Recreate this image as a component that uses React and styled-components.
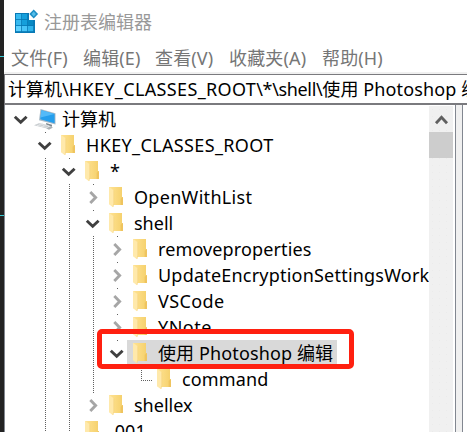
import React from "react";
import styled, { createGlobalStyle, css } from "styled-components";

const GlobalStyle = createGlobalStyle`
  * { box-sizing: border-box; }
  body {
    margin: 0;
    overflow: hidden;
    background: #fff;
    font-family: "Noto Sans", "Noto Sans CJK SC", sans-serif;
    font-size: 18px;
    color: #000;
  }
`;

const Screen = styled.div`
  position: relative;
  display: flex;
  width: 467px;
  height: 432px;
  overflow: hidden;
`;

const DesktopStrip = styled.div`
  flex: 0 0 4px;
  display: flex;
  flex-direction: column;
  gap: 158px;
  padding-top: 56px;
  background: #232323;
`;

const Tick = styled.div`
  height: 1px;
  background: #35c9d2;
`;

const Window = styled.div`
  flex: 1;
  min-width: 0;
  display: flex;
  flex-direction: column;
  background: #fff;
`;

const TitleBar = styled.header`
  height: 44px;
  flex: none;
  display: flex;
  align-items: center;
  gap: 5px;
  padding: 0 0 2px 10px;
  color: #999;
`;

const MenuBar = styled.nav`
  height: 28px;
  flex: none;
  display: flex;
  align-items: center;
  padding-left: 7px;
  color: #767676;
`;

const MenuItem = styled.span`
  flex: 0 0 ${(p) => p.$width}px;
  white-space: nowrap;
  line-height: 28px;
  letter-spacing: 0.15px;
`;

const AddressFrame = styled.div`
  height: 33px;
  flex: none;
  padding-top: 2px;
  background: #f0f0f0;
`;

const AddressBar = styled.div`
  height: 31px;
  border: solid #7a7a7e;
  border-width: 1px 0 2px 1px;
  padding-left: 3px;
  background: #fff;
  line-height: 28px;
  white-space: nowrap;
  overflow: hidden;
`;

const Text = styled.span`
  display: inline-block;
  white-space: pre;
  letter-spacing: ${(p) => p.$track || 0}px;
`;

const Body = styled.div`
  flex: 1;
  min-height: 0;
  display: flex;
  background: #f0f0f0;
`;

const TreePane = styled.div`
  width: 452px;
  display: flex;
  border: solid #828790;
  border-width: 0 1px;
  background: #fff;
`;

const Tree = styled.div`
  flex: 0 0 424px;
  padding: 1px 0 0 4px;
  overflow: hidden;
`;

const ValuesPane = styled.div`
  flex: 1;
  margin-left: 6px;
  border-left: 1px solid #828790;
  background: #fff;
`;

const Row = styled.div`
  height: 26px;
  display: flex;
  white-space: nowrap;
`;

const dots = "repeating-linear-gradient(to bottom, #606060 0 1px, transparent 1px 2px)";

const Cell = styled.div`
  flex: 0 0 24px;
  height: 26px;
  background-repeat: no-repeat;
  background-position: 12px 0;
  ${(p) => p.$guide && css`background-image: ${dots}; background-size: 1px 26px;`}
  ${(p) => p.$dot && css`background-image: ${dots}; background-size: 1px 1px;`}
  ${(p) => p.$elbow && css`
    background-image: ${dots}, repeating-linear-gradient(to right, #606060 0 1px, transparent 1px 2px);
    background-size: 1px 15px, 12px 1px;
    background-position: 12px 0, 12px 14px;
  `}
  svg { display: block; }
`;

const Entry = styled.div`
  display: flex;
  height: 26px;
  margin-left: -2px;
  padding: 0 4px 0 ${(p) => (p.$root ? 2 : 6)}px;
  background: ${(p) => (p.$selected ? "#d9d9d9" : "transparent")};
`;

const IconSlot = styled.div`
  flex: 0 0 ${(p) => (p.$root ? 29 : 25)}px;
  svg { display: block; }
`;

const Label = styled(Text)`
  line-height: 26px;
  height: 26px;
`;

const ScrollBar = styled.div`
  flex: 0 0 24px;
  margin-top: 1px;
  background-color: #f0f0f0;
  background-image: radial-gradient(#ebebeb 0.6px, transparent 1px);
  background-size: 7px 7px;
`;

const ScrollArrow = styled.div`
  height: 26px;
  svg { display: block; }
`;

const Thumb = styled.div`
  height: 26px;
  background: #cdcdcd;
`;

const Highlight = styled.div`
  position: absolute;
  left: 97px;
  top: 329px;
  width: 257px;
  height: 40px;
  border: 5px solid #ff2010;
  border-radius: 5px;
`;

function RegistryIcon() {
  const cells = [
    [16, 14, "#37baf0"], [22, 14, "#159fdb"],
    [16, 20, "#36b9ef"], [22, 20, "#159fdb"], [28, 20, "#0789c4"],
    [16, 26, "#5dd1ff"], [22, 26, "#48c5f8"], [28, 26, "#30b4eb"],
  ];
  return (
    <svg width="25" height="25" viewBox="14 9 25 25">
      <path d="M15 13h14v7h6v13H15z" fill="#0879b5" />
      {cells.map(([x, y, c]) => (
        <rect key={`${x}-${y}`} x={x} y={y} width="5.2" height="5.2" fill={c} />
      ))}
      <path d="M33.7 9.6l4.4 4.4-4.4 4.4-4.4-4.4z" fill="#1c8dc4" />
      <path d="M33.7 11.6l2.2 2.4-2.2 2.4-2.2-2.4z" fill="#55bde9" />
    </svg>
  );
}

function ComputerIcon() {
  return (
    <svg width="24" height="26" viewBox="0 0 24 26">
      <path d="M7.5 3L22.5 7.2V18.5L6 14.2z" fill="#a9bac6" />
      <path d="M8.5 4.3L21.6 8v9.2L7.2 13.3z" fill="#259eec" />
      <path d="M8.5 4.3L21.6 8 7.4 11.5z" fill="#53baf8" />
      <path d="M13 17l6 1.7v2.1l-5.5-1.4z" fill="#7f8990" />
      <path d="M1 19.3l5.5-2.4L17 19.5l-4 2.7z" fill="#c3c8cb" />
      <path d="M3.5 19l11 2.5M6 17.7l10 2.3M3.8 20l6-3M8 21l5-2.8" stroke="#eef0f1" strokeWidth=".6" />
      <path d="M13 22.3l4.2-1.8 2.8 1-4 2.3z" fill="#aab0b4" />
    </svg>
  );
}

function FolderIcon() {
  return (
    <svg width="15" height="26" viewBox="0 0 15 26">
      <defs>
        <linearGradient id="folderBack" x1="0" x2="1">
          <stop offset="0" stopColor="#ffe394" />
          <stop offset="1" stopColor="#f5d06b" />
        </linearGradient>
      </defs>
      <path d="M0 3h13v10.3h1V21H4L0 20z" fill="url(#folderBack)" />
      <path d="M11.7 15l1.3-1.7h1V21h-2.3z" fill="#efc45f" />
      <path d="M0 3l4.8 3.2v13.2L4 23.2 0 20.2z" fill="#ffe9ab" />
      <path d="M4.8 6.2v13L4 23" fill="none" stroke="#f3d17c" strokeWidth=".6" />
    </svg>
  );
}

function Chevron({ open }) {
  return (
    <svg width="24" height="26" viewBox="0 0 24 26" fill="none" strokeWidth="2.9">
      {open ? (
        <path d="M5.8 10.7l5.9 5.6 5.9-5.6" stroke="#404040" />
      ) : (
        <path d="M9.3 8.1l5.3 5.4-5.3 5.4" stroke="#a6a6a6" />
      )}
    </svg>
  );
}

const nodes = [
  { label: "计算机", level: 0, open: true, root: true },
  { label: "HKEY_CLASSES_ROOT", level: 1, open: true, guides: [], track: 0.36 },
  { label: "*", level: 2, open: true, guides: [1] },
  { label: "OpenWithList", level: 3, guides: [1, 2], track: 0.3 },
  { label: "shell", level: 3, open: true, guides: [1, 2] },
  { label: "removeproperties", level: 4, guides: [1, 2, 3], track: 0.12 },
  { label: "UpdateEncryptionSettingsWork", level: 4, guides: [1, 2, 3], track: 0.21 },
  { label: "VSCode", level: 4, guides: [1, 2, 3], track: 0.4 },
  { label: "YNote", level: 4, guides: [1, 2, 3], track: 0.5 },
  { label: "使用 Photoshop 编辑", level: 4, open: true, selected: true, guides: [1, 2, 3], track: 0.12 },
  { label: "command", level: 5, leaf: true, guides: [1, 2, 3], track: 0.15 },
  { label: "shellex", level: 3, guides: [1, 2] },
  { label: ".001", level: 2, leaf: true, guides: [1] },
];

const addressParts = [
  ["计算机\\", 0],
  ["HKEY_CLASSES_ROOT", 0.36],
  ["\\*\\shell\\", -0.35],
  ["使用 Photoshop 编辑", 0.12],
];

const menus = [
  ["文件(F)", 72],
  ["编辑(E)", 72],
  ["查看(V)", 74],
  ["收藏夹(A)", 93],
  ["帮助(H)", 72],
];

function TreeRow({ node }) {
  const { label, level, open, root, leaf, selected, guides = [], track } = node;
  return (
    <Row>
      {Array.from({ length: level }, (_, i) => (
        <Cell key={i} $guide={guides.includes(i)} />
      ))}
      <Cell $dot={!root && !leaf} $elbow={leaf}>
        {!leaf && <Chevron open={open} />}
      </Cell>
      <Entry $root={root} $selected={selected}>
        <IconSlot $root={root}>{root ? <ComputerIcon /> : <FolderIcon />}</IconSlot>
        <Label $track={track}>{label}</Label>
      </Entry>
    </Row>
  );
}

export default function App() {
  return (
    <>
      <GlobalStyle />
      <Screen>
        <DesktopStrip>
          <Tick />
          <Tick />
        </DesktopStrip>
        <Window>
          <TitleBar>
            <RegistryIcon />
            <Text>注册表编辑器</Text>
          </TitleBar>
          <MenuBar>
            {menus.map(([name, width]) => (
              <MenuItem key={name} $width={width}>{name}</MenuItem>
            ))}
          </MenuBar>
          <AddressFrame>
            <AddressBar>
              {addressParts.map(([part, track]) => (
                <Text key={part} $track={track}>{part}</Text>
              ))}
            </AddressBar>
          </AddressFrame>
          <Body>
            <TreePane>
              <Tree>
                {nodes.map((node) => (
                  <TreeRow key={node.label} node={node} />
                ))}
              </Tree>
              <ScrollBar>
                <ScrollArrow>
                  <svg width="24" height="26" viewBox="0 0 24 26">
                    <path d="M7 17.2l5.5-6 5.5 6" fill="none" stroke="#606060" strokeWidth="2.8" />
                  </svg>
                </ScrollArrow>
                <Thumb />
              </ScrollBar>
            </TreePane>
            <ValuesPane />
          </Body>
        </Window>
        <Highlight />
      </Screen>
    </>
  );
}
